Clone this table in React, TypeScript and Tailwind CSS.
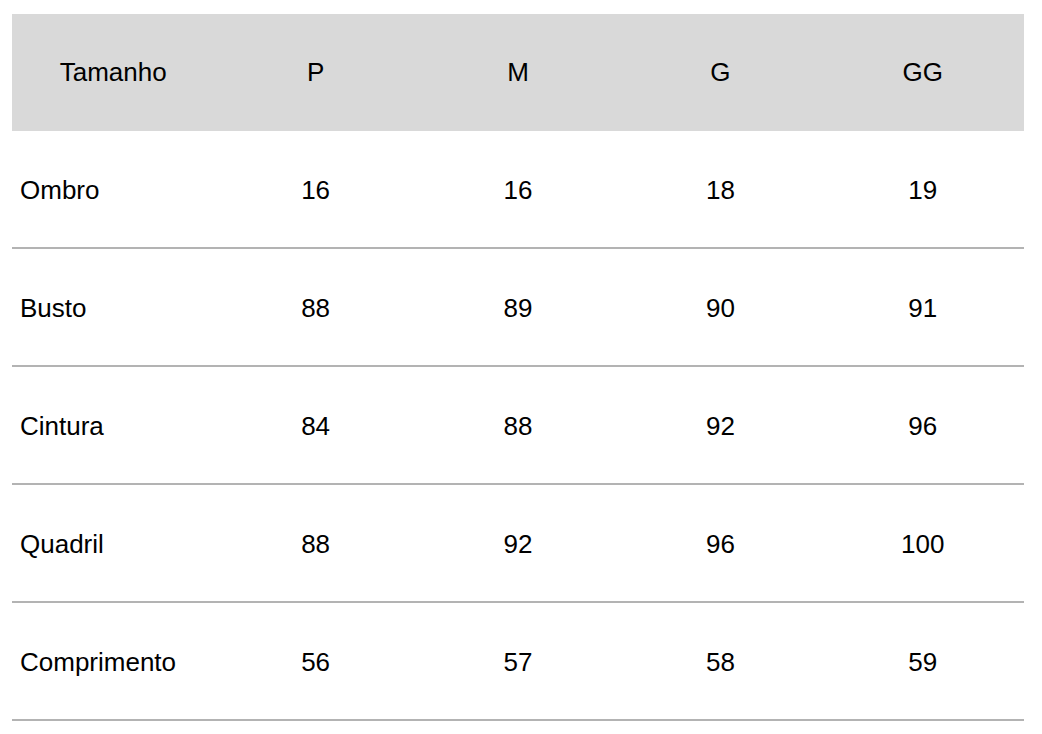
const header = ["Tamanho", "P", "M", "G", "GG"]

const rows: [string, string, string, string, string][] = [
  ["Ombro", "16", "16", "18", "19"],
  ["Busto", "88", "89", "90", "91"],
  ["Cintura", "84", "88", "92", "96"],
  ["Quadril", "88", "92", "96", "100"],
  ["Comprimento", "56", "57", "58", "59"],
]

export default function App() {
  return (
    <div className="min-h-screen bg-white pl-3 pr-[18px] pt-[14px] font-['Liberation_Sans',Arial,sans-serif] text-[26px] text-black">
      <div className="grid grid-cols-5 h-[117px] bg-[#d9d9d9] items-center">
        {header.map((h) => (
          <div key={h} className="text-center">
            {h}
          </div>
        ))}
      </div>
      {rows.map((r) => (
        <div
          key={r[0]}
          className="grid grid-cols-5 h-[118px] items-center border-b-2 border-[#b3b3b3]"
        >
          <div className="pl-2 pt-[3px]">{r[0]}</div>
          {r.slice(1).map((v, i) => (
            <div key={i} className="text-center pt-[3px]">
              {v}
            </div>
          ))}
        </div>
      ))}
    </div>
  )
}
